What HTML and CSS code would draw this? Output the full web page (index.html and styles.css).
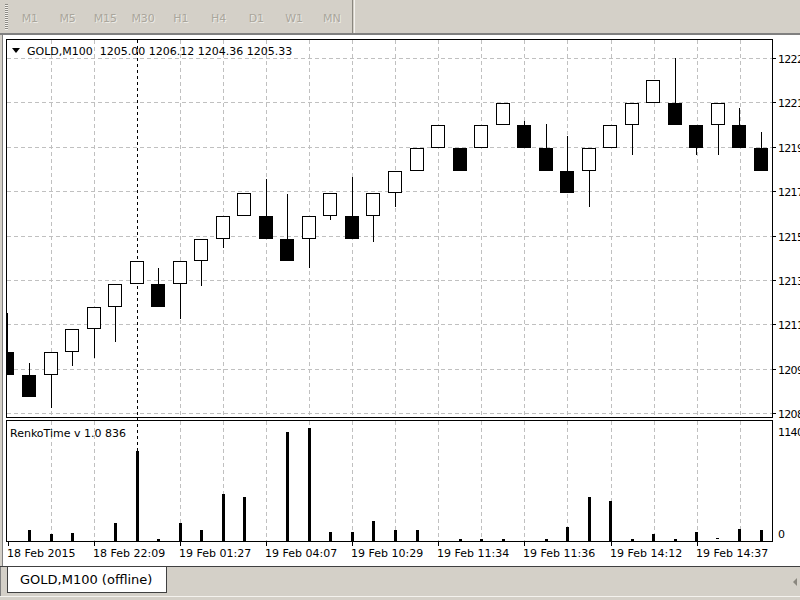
FILE: index.html
```html
<!DOCTYPE html>
<html>
<head>
<meta charset="utf-8">
<title>GOLD,M100</title>
<link rel="stylesheet" href="styles.css">
</head>
<body>
<div class="toolbar">
  <div class="grip"></div>
  <div class="tf">M1</div>
  <div class="tf">M5</div>
  <div class="tf">M15</div>
  <div class="tf">M30</div>
  <div class="tf">H1</div>
  <div class="tf">H4</div>
  <div class="tf">D1</div>
  <div class="tf">W1</div>
  <div class="tf">MN</div>
  <div class="sep"></div>
</div>
<div class="chartwin">
<svg class="chart" width="800" height="532" viewBox="0 34 800 532" xmlns="http://www.w3.org/2000/svg">
  <defs>
    <clipPath id="plot"><rect x="7" y="40" width="765" height="377"/></clipPath>
    <clipPath id="sub"><rect x="7" y="421" width="765" height="120"/></clipPath>
  </defs>
  <rect class="bg" x="0" y="34" width="800" height="532"/>
  <rect class="edge-a" x="0" y="34" width="2" height="532"/>
  <rect class="edge-b" x="2" y="34" width="1" height="532"/>
  <rect class="edge-b" x="0" y="34" width="800" height="1"/>

  <!-- main grid -->
  <g class="grid">
    <line x1="7" x2="772" y1="58.5" y2="58.5"/>
    <line x1="7" x2="772" y1="102.5" y2="102.5"/>
    <line x1="7" x2="772" y1="147.5" y2="147.5"/>
    <line x1="7" x2="772" y1="191.5" y2="191.5"/>
    <line x1="7" x2="772" y1="236.5" y2="236.5"/>
    <line x1="7" x2="772" y1="280.5" y2="280.5"/>
    <line x1="7" x2="772" y1="324.5" y2="324.5"/>
    <line x1="7" x2="772" y1="369.5" y2="369.5"/>
    <line x1="7" x2="772" y1="413.5" y2="413.5"/>
    <line x1="51.5" x2="51.5" y1="40" y2="417"/>
    <line x1="94.5" x2="94.5" y1="40" y2="417"/>
    <line x1="180.5" x2="180.5" y1="40" y2="417"/>
    <line x1="223.5" x2="223.5" y1="40" y2="417"/>
    <line x1="266.5" x2="266.5" y1="40" y2="417"/>
    <line x1="309.5" x2="309.5" y1="40" y2="417"/>
    <line x1="352.5" x2="352.5" y1="40" y2="417"/>
    <line x1="395.5" x2="395.5" y1="40" y2="417"/>
    <line x1="438.5" x2="438.5" y1="40" y2="417"/>
    <line x1="481.5" x2="481.5" y1="40" y2="417"/>
    <line x1="524.5" x2="524.5" y1="40" y2="417"/>
    <line x1="567.5" x2="567.5" y1="40" y2="417"/>
    <line x1="611.5" x2="611.5" y1="40" y2="417"/>
    <line x1="654.5" x2="654.5" y1="40" y2="417"/>
    <line x1="697.5" x2="697.5" y1="40" y2="417"/>
    <line x1="740.5" x2="740.5" y1="40" y2="417"/>
    <!-- sub grid -->
    <line x1="51.5" x2="51.5" y1="421" y2="541"/>
    <line x1="94.5" x2="94.5" y1="421" y2="541"/>
    <line x1="180.5" x2="180.5" y1="421" y2="541"/>
    <line x1="223.5" x2="223.5" y1="421" y2="541"/>
    <line x1="266.5" x2="266.5" y1="421" y2="541"/>
    <line x1="309.5" x2="309.5" y1="421" y2="541"/>
    <line x1="352.5" x2="352.5" y1="421" y2="541"/>
    <line x1="395.5" x2="395.5" y1="421" y2="541"/>
    <line x1="438.5" x2="438.5" y1="421" y2="541"/>
    <line x1="481.5" x2="481.5" y1="421" y2="541"/>
    <line x1="524.5" x2="524.5" y1="421" y2="541"/>
    <line x1="567.5" x2="567.5" y1="421" y2="541"/>
    <line x1="611.5" x2="611.5" y1="421" y2="541"/>
    <line x1="654.5" x2="654.5" y1="421" y2="541"/>
    <line x1="697.5" x2="697.5" y1="421" y2="541"/>
    <line x1="740.5" x2="740.5" y1="421" y2="541"/>
  </g>

  <!-- period separator -->
  <line class="psep" x1="137.5" x2="137.5" y1="40" y2="541"/>

  <!-- candles -->
  <g clip-path="url(#plot)">
    <g class="wick">
      <line x1="7.5" x2="7.5" y1="313" y2="352"/>
      <line x1="29.5" x2="29.5" y1="363" y2="375"/>
      <line x1="51.5" x2="51.5" y1="375" y2="408"/>
      <line x1="72.5" x2="72.5" y1="352" y2="366"/>
      <line x1="94.5" x2="94.5" y1="329" y2="358"/>
      <line x1="115.5" x2="115.5" y1="307" y2="342"/>
      <line x1="158.5" x2="158.5" y1="268" y2="284"/>
      <line x1="180.5" x2="180.5" y1="284" y2="319"/>
      <line x1="201.5" x2="201.5" y1="261" y2="286"/>
      <line x1="223.5" x2="223.5" y1="239" y2="248"/>
      <line x1="266.5" x2="266.5" y1="179" y2="216"/>
      <line x1="287.5" x2="287.5" y1="194" y2="239"/>
      <line x1="309.5" x2="309.5" y1="239" y2="268"/>
      <line x1="330.5" x2="330.5" y1="216" y2="220"/>
      <line x1="352.5" x2="352.5" y1="177" y2="216"/>
      <line x1="373.5" x2="373.5" y1="216" y2="242"/>
      <line x1="395.5" x2="395.5" y1="193" y2="207"/>
      <line x1="524.5" x2="524.5" y1="121" y2="125"/>
      <line x1="546.5" x2="546.5" y1="124" y2="148"/>
      <line x1="567.5" x2="567.5" y1="136" y2="171"/>
      <line x1="589.5" x2="589.5" y1="171" y2="207"/>
      <line x1="632.5" x2="632.5" y1="125" y2="155"/>
      <line x1="675.5" x2="675.5" y1="58" y2="103"/>
      <line x1="696.5" x2="696.5" y1="148" y2="155"/>
      <line x1="718.5" x2="718.5" y1="125" y2="155"/>
      <line x1="739.5" x2="739.5" y1="108" y2="125"/>
      <line x1="761.5" x2="761.5" y1="132" y2="148"/>
    </g>
    <rect class="dn" x="0" y="352" width="14" height="23"/>
    <rect class="dn" x="22" y="375" width="14" height="22"/>
    <rect class="up" x="44.5" y="352.5" width="13" height="22"/>
    <rect class="up" x="65.5" y="329.5" width="13" height="22"/>
    <rect class="up" x="87.5" y="307.5" width="13" height="21"/>
    <rect class="up" x="108.5" y="284.5" width="13" height="22"/>
    <rect class="up" x="130.5" y="261.5" width="13" height="22"/>
    <rect class="dn" x="151" y="284" width="14" height="23"/>
    <rect class="up" x="173.5" y="261.5" width="13" height="22"/>
    <rect class="up" x="194.5" y="239.5" width="13" height="21"/>
    <rect class="up" x="216.5" y="216.5" width="13" height="22"/>
    <rect class="up" x="237.5" y="193.5" width="13" height="22"/>
    <rect class="dn" x="259" y="216" width="14" height="23"/>
    <rect class="dn" x="280" y="239" width="14" height="22"/>
    <rect class="up" x="302.5" y="216.5" width="13" height="22"/>
    <rect class="up" x="323.5" y="193.5" width="13" height="22"/>
    <rect class="dn" x="345" y="216" width="14" height="23"/>
    <rect class="up" x="366.5" y="193.5" width="13" height="22"/>
    <rect class="up" x="388.5" y="171.5" width="13" height="21"/>
    <rect class="up" x="410.5" y="148.5" width="13" height="22"/>
    <rect class="up" x="431.5" y="125.5" width="13" height="22"/>
    <rect class="dn" x="453" y="148" width="14" height="23"/>
    <rect class="up" x="474.5" y="125.5" width="13" height="22"/>
    <rect class="up" x="496.5" y="103.5" width="13" height="21"/>
    <rect class="dn" x="517" y="125" width="14" height="23"/>
    <rect class="dn" x="539" y="148" width="14" height="23"/>
    <rect class="dn" x="560" y="171" width="14" height="22"/>
    <rect class="up" x="582.5" y="148.5" width="13" height="22"/>
    <rect class="up" x="603.5" y="125.5" width="13" height="22"/>
    <rect class="up" x="625.5" y="103.5" width="13" height="21"/>
    <rect class="up" x="646.5" y="80.5" width="13" height="22"/>
    <rect class="dn" x="668" y="103" width="14" height="22"/>
    <rect class="dn" x="689" y="125" width="14" height="23"/>
    <rect class="up" x="711.5" y="103.5" width="13" height="21"/>
    <rect class="dn" x="732" y="125" width="14" height="23"/>
    <rect class="dn" x="754" y="148" width="14" height="23"/>
  </g>

  <!-- volume bars -->
  <g class="vol" clip-path="url(#sub)">
    <rect x="28" y="530" width="3" height="11"/>
    <rect x="50" y="534" width="3" height="7"/>
    <rect x="71" y="533" width="3" height="8"/>
    <rect x="114" y="523" width="3" height="18"/>
    <rect x="136" y="451" width="3" height="90"/>
    <rect x="157" y="539" width="3" height="2"/>
    <rect x="179" y="523" width="3" height="18"/>
    <rect x="200" y="530" width="3" height="11"/>
    <rect x="222" y="494" width="3" height="47"/>
    <rect x="243" y="497" width="3" height="44"/>
    <rect x="286" y="432" width="3" height="109"/>
    <rect x="308" y="428" width="3" height="113"/>
    <rect x="329" y="532" width="3" height="9"/>
    <rect x="351" y="532" width="3" height="9"/>
    <rect x="372" y="521" width="3" height="20"/>
    <rect x="394" y="530" width="3" height="11"/>
    <rect x="416" y="530" width="3" height="11"/>
    <rect x="459" y="539" width="3" height="2"/>
    <rect x="480" y="539" width="3" height="2"/>
    <rect x="502" y="539" width="3" height="2"/>
    <rect x="545" y="539" width="3" height="2"/>
    <rect x="566" y="527" width="3" height="14"/>
    <rect x="588" y="497" width="3" height="44"/>
    <rect x="609" y="501" width="3" height="40"/>
    <rect x="631" y="539" width="3" height="2"/>
    <rect x="652" y="534" width="3" height="7"/>
    <rect x="674" y="539" width="3" height="2"/>
    <rect x="695" y="532" width="3" height="9"/>
    <rect x="716" y="538" width="3" height="1"/>
    <rect x="738" y="529" width="3" height="12"/>
    <rect x="760" y="530" width="3" height="11"/>
  </g>

  <!-- frames -->
  <rect class="frame" x="6.5" y="39.5" width="766" height="378"/>
  <rect class="frame" x="6.5" y="420.5" width="766" height="121"/>

  <!-- axis ticks -->
  <g class="tick">
    <line x1="773" x2="776" y1="58.5" y2="58.5"/>
    <line x1="773" x2="776" y1="102.5" y2="102.5"/>
    <line x1="773" x2="776" y1="147.5" y2="147.5"/>
    <line x1="773" x2="776" y1="191.5" y2="191.5"/>
    <line x1="773" x2="776" y1="236.5" y2="236.5"/>
    <line x1="773" x2="776" y1="280.5" y2="280.5"/>
    <line x1="773" x2="776" y1="324.5" y2="324.5"/>
    <line x1="773" x2="776" y1="369.5" y2="369.5"/>
    <line x1="773" x2="776" y1="413.5" y2="413.5"/>
    <line x1="8.5" x2="8.5" y1="541" y2="546"/>
    <line x1="94.5" x2="94.5" y1="541" y2="546"/>
    <line x1="180.5" x2="180.5" y1="541" y2="546"/>
    <line x1="266.5" x2="266.5" y1="541" y2="546"/>
    <line x1="352.5" x2="352.5" y1="541" y2="546"/>
    <line x1="438.5" x2="438.5" y1="541" y2="546"/>
    <line x1="524.5" x2="524.5" y1="541" y2="546"/>
    <line x1="611.5" x2="611.5" y1="541" y2="546"/>
    <line x1="697.5" x2="697.5" y1="541" y2="546"/>
  </g>

  <!-- header -->
  <polygon class="arrow" points="12,48 20,48 16,53"/>
  <text class="lbl" x="27" y="51" xml:space="preserve">GOLD,M100  1205.00 1206.12 1204.36 1205.33</text>
  <text class="lbl" x="10" y="433">RenkoTime v 1.0 836</text>

  <!-- price labels (clipped by the window edge, as in the terminal) -->
  <g class="lbl price">
    <text x="778" y="59">1222.90</text>
    <text x="778" y="103">1221.05</text>
    <text x="778" y="148">1219.20</text>
    <text x="778" y="192">1217.35</text>
    <text x="778" y="237">1215.50</text>
    <text x="778" y="281">1213.65</text>
    <text x="778" y="325">1211.80</text>
    <text x="778" y="370">1209.95</text>
    <text x="778" y="414">1208.10</text>
    <text x="778" y="432">1140</text>
    <text x="778" y="534">0</text>
  </g>

  <!-- time labels -->
  <g class="lbl">
    <text x="7" y="553">18 Feb 2015</text>
    <text x="93" y="553">18 Feb 22:09</text>
    <text x="179" y="553">19 Feb 01:27</text>
    <text x="265" y="553">19 Feb 04:07</text>
    <text x="351" y="553">19 Feb 10:29</text>
    <text x="437" y="553">19 Feb 11:34</text>
    <text x="523" y="553">19 Feb 11:36</text>
    <text x="610" y="553">19 Feb 14:12</text>
    <text x="696" y="553">19 Feb 14:37</text>
  </g>
</svg>
</div>
<div class="tabbar">
  <div class="tab">GOLD,M100 (offline)</div>
  <div class="scroll"></div>
</div>
</body>
</html>
```

FILE: styles.css
```css
html, body {
  margin: 0;
  padding: 0;
}
body {
  width: 800px;
  height: 600px;
  overflow: hidden;
  background: #d4d0c8;
  font-family: "DejaVu Sans", sans-serif;
  font-size: 11px;
}
.toolbar {
  height: 33px;
  display: flex;
  align-items: center;
  padding-left: 5px;
  border-bottom: 1px solid #808080;
  box-sizing: content-box;
}
.grip {
  width: 3px;
  height: 26px;
  margin-right: 3px;
  background: repeating-linear-gradient(to bottom, #8c8a84 0 1px, #f4f2ee 1px 2px);
}
.tf {
  width: 37.75px;
  text-align: center;
  color: #aaa69c;
  text-shadow: 1px 1px 0 #ecebe6;
  line-height: 14px;
  padding-top: 4px;
}
.sep {
  align-self: stretch;
  width: 1px;
  margin-left: 1px;
  border-left: 1px solid #8a877f;
  border-right: 1px solid #f4f2ee;
}
.chartwin {
  height: 532px;
}
.chart {
  display: block;
}
.bg { fill: #ffffff; }
.edge-a { fill: #d4d0c8; }
.edge-b { fill: #808080; }
.grid line {
  stroke: #c0c0c0;
  stroke-width: 1;
  stroke-dasharray: 4 3;
  shape-rendering: crispEdges;
}
.psep {
  stroke: #000;
  stroke-width: 1;
  stroke-dasharray: 3 3;
  shape-rendering: crispEdges;
}
.wick line {
  stroke: #000;
  stroke-width: 1;
  shape-rendering: crispEdges;
}
.up {
  fill: #fff;
  stroke: #000;
  stroke-width: 1;
  shape-rendering: crispEdges;
}
.dn {
  fill: #000;
  shape-rendering: crispEdges;
}
.vol rect {
  fill: #000;
  shape-rendering: crispEdges;
}
.frame {
  fill: none;
  stroke: #000;
  stroke-width: 1;
  shape-rendering: crispEdges;
}
.tick line {
  stroke: #000;
  stroke-width: 1;
  shape-rendering: crispEdges;
}
.arrow { fill: #000; }
.lbl, .lbl text {
  font-family: "DejaVu Sans", sans-serif;
  font-size: 11px;
  fill: #000;
  dominant-baseline: central;
}
.price text {
  letter-spacing: -0.7px;
}
.tabbar {
  height: 29px;
  display: flex;
  align-items: flex-start;
  justify-content: space-between;
  border-top: 1px solid #404040;
  border-bottom: 1px solid #f4f2ee;
  padding-left: 7px;
  box-shadow: inset 2px 0 0 -1px #808080;
}
.tab {
  width: 160px;
  height: 26px;
  box-sizing: border-box;
  background: #ffffff;
  border: 1px solid #404040;
  border-top: none;
  padding-left: 12px;
  font-size: 13px;
  line-height: 25px;
  color: #000;
}
.scroll {
  width: 0;
  height: 0;
  margin-top: 11px;
  margin-right: 3px;
  border-top: 4px solid transparent;
  border-bottom: 4px solid transparent;
  border-right: 4px solid #8a877f;
}
```
